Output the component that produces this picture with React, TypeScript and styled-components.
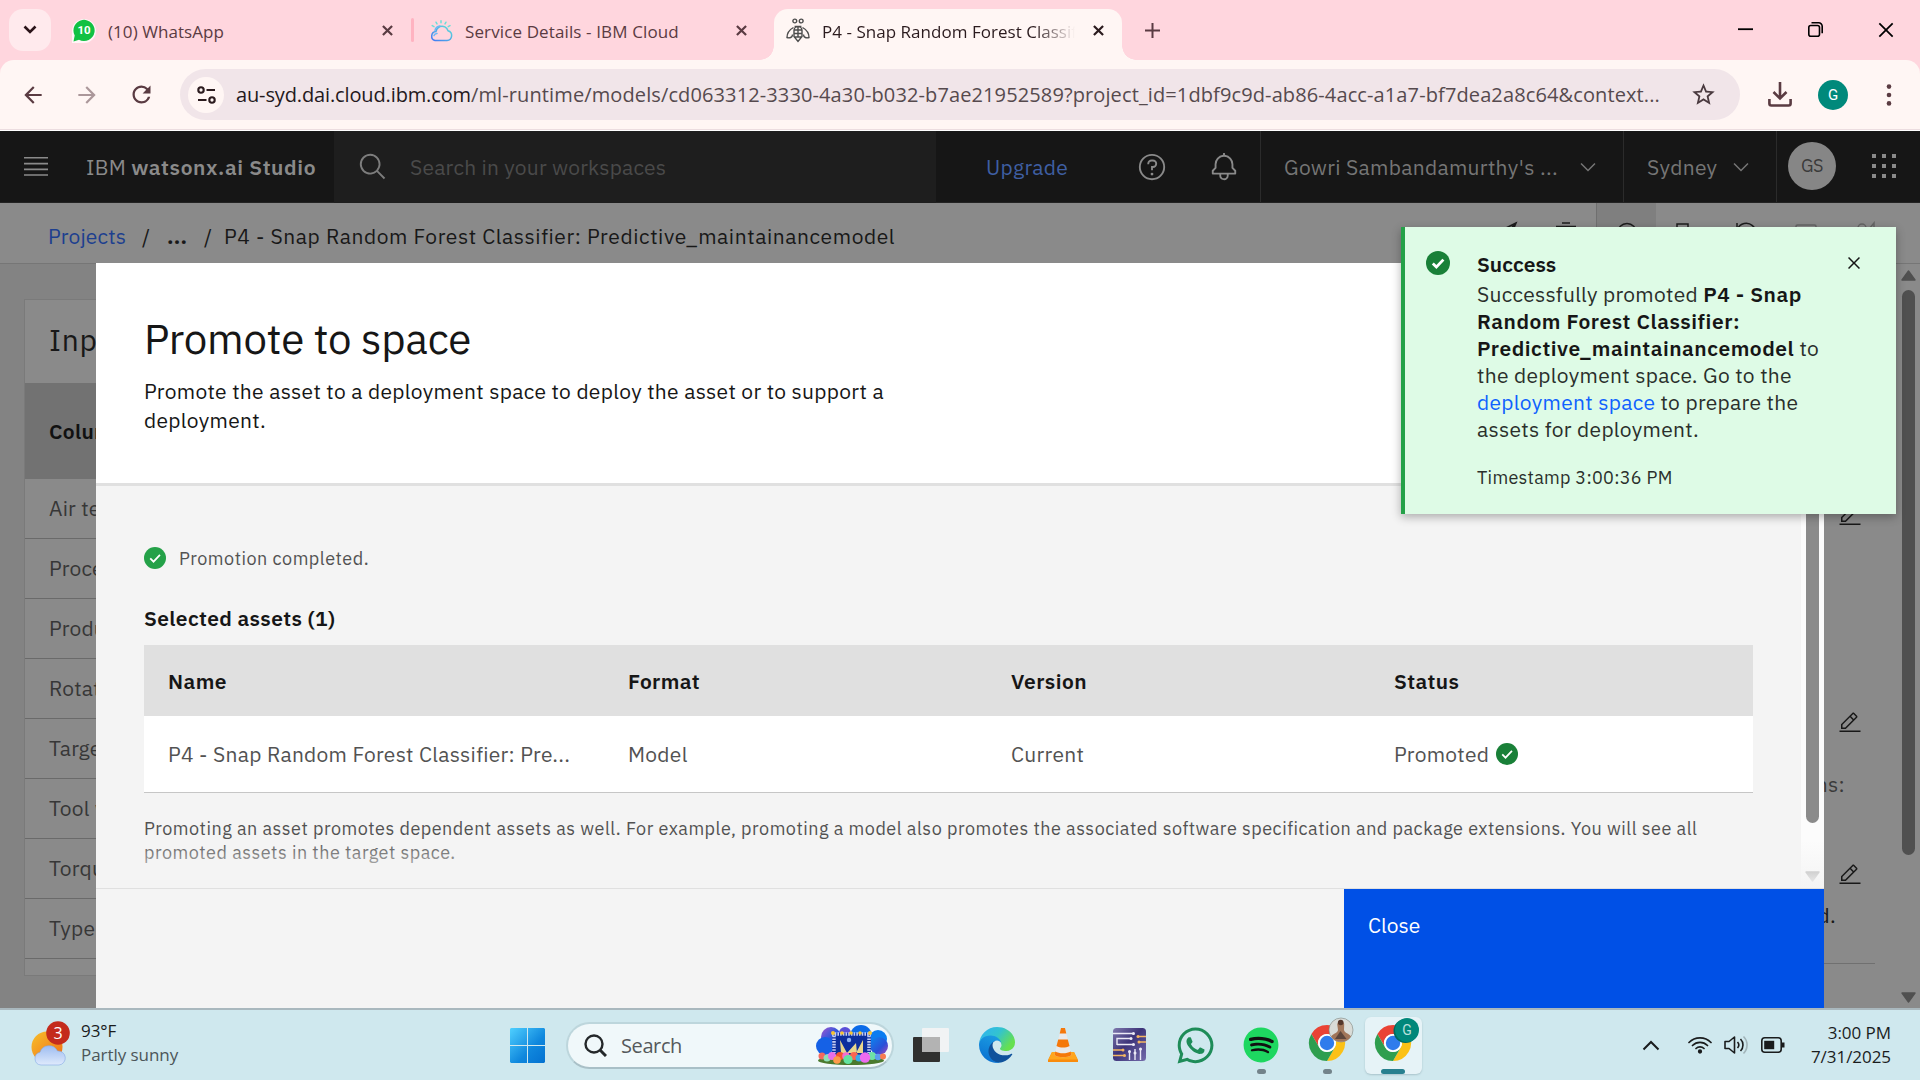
import React from "react";
import styled, { createGlobalStyle, css } from "styled-components";
import { FaWhatsapp, FaSpotify } from "react-icons/fa";
import { MdArrowBack, MdArrowForward, MdRefresh, MdStarBorder } from "react-icons/md";

const plex = `"IBM Plex Sans", Roboto, "Liberation Sans", sans-serif`;
const segoe = `"Segoe UI", "Open Sans", "Noto Sans", sans-serif`;

const Global = createGlobalStyle`
  *, *::before, *::after { box-sizing: border-box; }
  html, body { margin: 0; padding: 0; overflow: hidden; }
  svg { display: block; flex: none; }
`;

const Screen = styled.div`
  width: 1920px;
  height: 1080px;
  display: flex;
  flex-direction: column;
  overflow: hidden;
  background: #ffd6de;
  font-family: ${segoe};
`;

/* ---------- browser chrome ---------- */

const TabStrip = styled.div`
  height: 60px;
  flex: none;
  display: flex;
  padding: 9px 9px 0;
  color: #5a3b42;
`;

const TabSearch = styled.div`
  width: 42px;
  height: 42px;
  border-radius: 14px;
  background: #ffeaed;
  display: flex;
  align-items: center;
  justify-content: center;
  color: #2a1419;
`;

const Tab = styled.div<{ $width: number; $pad: number; $active?: boolean }>`
  position: relative;
  width: ${(p) => p.$width}px;
  height: 51px;
  display: flex;
  align-items: center;
  padding: 0 18px 8px ${(p) => p.$pad}px;
  ${(p) =>
    p.$active &&
    css`
      background: #fff6f4;
      color: #2b1b1e;
      border-radius: 14px 14px 0 0;
      &::before,
      &::after {
        content: "";
        position: absolute;
        bottom: 0;
        width: 14px;
        height: 14px;
      }
      &::before {
        left: -14px;
        background: radial-gradient(circle at 0 0, transparent 13.5px, #fff6f4 14px);
      }
      &::after {
        right: -14px;
        background: radial-gradient(circle at 100% 0, transparent 13.5px, #fff6f4 14px);
      }
    `}
`;

const TabTitle = styled.div<{ $ls?: number; $fade?: boolean }>`
  flex: 1;
  margin: 3px 18px 0 12px;
  font-size: 17px;
  line-height: 24px;
  letter-spacing: ${(p) => p.$ls ?? 0}px;
  white-space: nowrap;
  overflow: hidden;
  ${(p) => p.$fade && `mask-image: linear-gradient(90deg, #000 84%, transparent);`}
`;

const TabDivider = styled.i`
  width: 3px;
  height: 24px;
  margin-top: 9px;
  border-radius: 2px;
  background: #ffb3c1;
`;

const NewTab = styled.div`
  width: 60px;
  height: 42px;
  display: flex;
  align-items: center;
  justify-content: center;
`;

const WindowButtons = styled.div`
  margin-left: auto;
  width: 210px;
  height: 42px;
  display: flex;
  color: #000;
  margin-right: -9px;
  position: relative;
  & > svg {
    margin: 13px 27.5px;
  }
`;

const Toolbar = styled.div`
  height: 71px;
  flex: none;
  display: flex;
  align-items: center;
  padding: 0 25px 2px 20px;
  background: #fff6f4;
  border-radius: 14px 14px 0 0;
  box-shadow: inset 0 -1px #fff, inset 0 -2px #ecdde0;
  color: #5a3b42;
`;

const NavIcon = styled.div<{ $dim?: boolean }>`
  width: 54px;
  display: flex;
  opacity: ${(p) => (p.$dim ? 0.5 : 1)};
`;

const Omnibox = styled.div`
  width: 1560px;
  height: 51px;
  margin-left: -2px;
  border-radius: 26px;
  background: #f1e5e9;
  display: flex;
  align-items: center;
  padding: 0 23px 0 8px;
`;

const SiteInfo = styled.div`
  width: 36px;
  height: 36px;
  border-radius: 50%;
  background: #fff6f4;
  display: flex;
  align-items: center;
  justify-content: center;
`;

const Url = styled.div`
  flex: 1;
  margin-left: 12px;
  font-size: 20px;
  line-height: 28px;
  letter-spacing: 0.115px;
  white-space: nowrap;
  color: #564a4e;
  b {
    font-weight: 400;
    letter-spacing: -0.13px;
    color: #24191c;
  }
`;

const ProfileBadge = styled.div`
  width: 30px;
  height: 30px;
  border-radius: 50%;
  margin: 0 38px 0 26px;
  background: #00897b;
  color: #fff;
  font: 15px/30px Roboto, sans-serif;
  text-align: center;
`;

/* ---------- application ---------- */

const AppArea = styled.div`
  position: relative;
  height: 877px;
  flex: none;
  display: flex;
  flex-direction: column;
  overflow: hidden;
  background: #8a8a8a;
  font-family: ${plex};
  font-size: 21px;
  letter-spacing: 0.3px;
  color: #181818;
`;

const Header = styled.header`
  height: 72px;
  flex: none;
  display: flex;
  background: #161616;
  border-bottom: 1px solid #232323;
  color: #8a8a8a;
`;

const Brand = styled.div`
  width: 334px;
  display: flex;
  align-items: center;
  padding-left: 24px;
  gap: 38px;
  white-space: pre;
  b {
    font-weight: 600;
    letter-spacing: 0.6px;
  }
`;

const HeaderSearch = styled.div`
  width: 602px;
  height: 72px;
  display: flex;
  align-items: center;
  padding-left: 24px;
  gap: 22px;
  background: #1e1e1e;
  color: #4a4a4a;
  letter-spacing: 0.21px;
  svg {
    color: #7d7d7d;
  }
`;

const HeaderActions = styled.div`
  width: 324px;
  display: flex;
  align-items: center;
  padding-left: 50px;
  span {
    color: #3f5fa3;
    width: 151px;
  }
  svg + svg {
    margin-left: 42px;
  }
`;

const HeaderSelect = styled.div<{ $width: number }>`
  width: ${(p) => p.$width}px;
  border-left: 1px solid #2b2b2b;
  display: flex;
  align-items: center;
  justify-content: space-between;
  padding: 0 23px;
  color: #757575;
`;

const HeaderEnd = styled.div`
  flex: 1;
  border-left: 1px solid #2b2b2b;
  display: flex;
  align-items: center;
  justify-content: space-between;
  padding: 0 24px 2px 11px;
`;

const Initials = styled.div`
  width: 48px;
  height: 48px;
  border-radius: 50%;
  background: #868686;
  color: #3a3a3a;
  font-size: 18px;
  letter-spacing: -0.4px;
  line-height: 48px;
  text-align: center;
`;

const Crumbs = styled.nav`
  height: 61px;
  flex: none;
  display: flex;
  align-items: center;
  padding: 0 24px 0 48px;
  background: #8a8a8a;
  border-bottom: 1px solid #767676;
`;

const Crumb = styled.span<{ $w?: number; $link?: boolean; $ls?: number; $bold?: boolean }>`
  padding-top: 5px;
  width: ${(p) => (p.$w ? `${p.$w}px` : "auto")};
  color: ${(p) => (p.$link ? "#1d3f8f" : "#181818")};
  letter-spacing: ${(p) => p.$ls ?? 0.18}px;
  font-weight: ${(p) => (p.$bold ? 700 : 400)};
  white-space: nowrap;
`;

const CrumbTools = styled.div`
  margin-left: auto;
  align-self: stretch;
  display: flex;
`;

const CrumbTool = styled.div<{ $active?: boolean; $dim?: boolean }>`
  width: 60px;
  display: flex;
  align-items: center;
  justify-content: center;
  color: ${(p) => (p.$dim ? "#646464" : "#1c1c1c")};
  ${(p) => p.$active && `background: #7f7f7f; border-left: 1px solid #6f6f6f;`}
`;

const Workspace = styled.div`
  flex: 1;
  display: flex;
  min-height: 0;
`;

const LeftPane = styled.div`
  width: 1200px;
  padding: 35px 24px 32px;
  background: #838383;
`;

const SchemaCard = styled.div`
  height: 677px;
  background: #8a8a8a;
  border: 1px solid #7a7a7a;
`;

const SchemaTitle = styled.div`
  height: 83px;
  padding: 22px 24px 0;
  font-size: 30px;
  line-height: 36px;
  letter-spacing: 0.7px;
`;

const SchemaHead = styled.div`
  height: 96px;
  padding: 0 24px;
  background: #727272;
  font-weight: 600;
  line-height: 96px;
  color: #111;
`;

const SchemaRow = styled.div`
  height: 60px;
  padding: 0 24px;
  border-bottom: 1px solid #6a6a6a;
  line-height: 59px;
  letter-spacing: 0.2px;
  color: #373737;
`;

const RightPane = styled.div`
  flex: 1;
  padding: 240px 22px 0 0;
  display: flex;
  flex-direction: column;
  align-items: flex-end;
`;

const EditSlot = styled.div<{ $gap: number }>`
  height: 24px;
  margin: 0 13px ${(p) => p.$gap}px 0;
`;

const PaneText = styled.div<{ $mr: number; $gap: number; $dim?: boolean }>`
  line-height: 26px;
  margin: 0 ${(p) => p.$mr}px ${(p) => p.$gap}px 0;
  color: ${(p) => (p.$dim ? "#3a3a3a" : "#181818")};
`;

const PaneRule = styled.div`
  width: 600px;
  height: 1px;
  background: #707070;
`;

const Scroll = styled.div<{ $pad: string; $track: string; $thumb: string }>`
  width: 23px;
  flex: none;
  display: flex;
  flex-direction: column;
  align-items: center;
  justify-content: space-between;
  padding: ${(p) => p.$pad};
  background: ${(p) => p.$track};
  color: ${(p) => p.$thumb};
`;

const Thumb = styled.div<{ $h: number; $mb: number }>`
  width: 13px;
  height: ${(p) => p.$h}px;
  margin-bottom: ${(p) => p.$mb}px;
  border-radius: 7px;
  background: currentColor;
`;

/* ---------- modal ---------- */

const Modal = styled.section`
  position: absolute;
  left: 96px;
  top: 132px;
  width: 1728px;
  height: 745px;
  display: flex;
  flex-direction: column;
  background: #f4f4f4;
  color: #161616;
`;

const ModalHead = styled.div`
  height: 223px;
  padding: 48px 48px 0;
  background: #fff;
  border-bottom: 3px solid #e0e0e0;
`;

const ModalTitle = styled.h1`
  margin: 0;
  font-size: 42px;
  font-weight: 400;
  line-height: 55px;
  letter-spacing: -0.22px;
`;

const ModalLead = styled.p`
  margin: 11px 0 0;
  width: 780px;
  line-height: 29px;
`;

const ModalScroll = styled.div`
  position: relative;
  height: 402px;
  display: flex;
  overflow: hidden;
  &::after {
    content: "";
    position: absolute;
    left: 0;
    right: 0;
    bottom: 0;
    height: 48px;
    background: linear-gradient(rgba(244, 244, 244, 0), #f4f4f4);
  }
`;

const ModalBody = styled.div`
  flex: 1;
  padding: 60px 48px 0;
`;

const Completed = styled.div`
  height: 24px;
  display: flex;
  align-items: center;
  gap: 13px;
  font-size: 18px;
  letter-spacing: 0.51px;
  color: #525252;
`;

const AssetsTitle = styled.h2`
  margin: 35px 0 13px;
  font-size: 21px;
  font-weight: 600;
  line-height: 27px;
  letter-spacing: 0.36px;
`;

const TableRow = styled.div<{ $head?: boolean }>`
  display: grid;
  grid-template-columns: 460px 383px 383px 383px;
  align-items: center;
  height: ${(p) => (p.$head ? 71 : 77)}px;
  background: ${(p) => (p.$head ? "#e0e0e0" : "#fff")};
  border-bottom: ${(p) => (p.$head ? "none" : "1px solid #c6c6c6")};
  font-weight: ${(p) => (p.$head ? 600 : 400)};
  letter-spacing: ${(p) => (p.$head ? 0.4 : 0.28)}px;
  color: ${(p) => (p.$head ? "#161616" : "#525252")};
`;

const Cell = styled.div`
  display: flex;
  align-items: center;
  gap: 7px;
  padding-left: 24px;
  white-space: nowrap;
`;

const Hint = styled.p`
  margin: 24px 0 0;
  font-size: 18px;
  line-height: 24px;
  letter-spacing: 0.5px;
  color: #525252;
`;

const ModalFoot = styled.div`
  height: 120px;
  border-top: 1px solid #e0e0e0;
  display: flex;
  justify-content: flex-end;
`;

const CloseButton = styled.button`
  width: 480px;
  padding: 22px 24px;
  border: 0;
  background: #0050e6;
  color: #fff;
  font: 21px/28px ${plex};
  text-align: left;
  display: flex;
  align-items: flex-start;
`;

/* ---------- toast ---------- */

const Toast = styled.aside`
  position: absolute;
  left: 1401px;
  top: 96px;
  width: 495px;
  height: 287px;
  display: flex;
  padding: 24px 30px 0 21px;
  background: #defbe6;
  border-left: 4px solid #24a148;
  box-shadow: 0 3px 9px rgba(0, 0, 0, 0.3);
  line-height: 27px;
  color: #161616;
`;

const ToastText = styled.div`
  flex: 1;
  margin-left: 27px;
  white-space: nowrap;
  color: #2a2f2b;
  b {
    font-weight: 600;
    letter-spacing: 0.52px;
    color: #161616;
  }
  a {
    color: #0f62fe;
  }
`;

const ToastTitle = styled.div`
  margin-bottom: 3px;
  font-weight: 600;
  letter-spacing: 0.04px;
  color: #161616;
`;

const ToastTime = styled.div`
  margin-top: 23px;
  font-size: 18px;
  line-height: 24px;
`;

const ToastClose = styled.div`
  margin-top: 0;
`;

/* ---------- taskbar ---------- */

const Taskbar = styled.footer`
  height: 72px;
  flex: none;
  display: flex;
  align-items: center;
  background: #cfe8ee;
  border-top: 2px solid #a9b8be;
  color: #1a1c1d;
`;

const Weather = styled.div`
  width: 510px;
  display: flex;
  align-items: center;
  padding: 0 0 4px 30px;
  gap: 9px;
`;

const Stack = styled.div<{ $right?: boolean }>`
  font-size: 17px;
  line-height: 24px;
  letter-spacing: -0.05px;
  text-align: ${(p) => (p.$right ? "right" : "left")};
  small {
    display: block;
    font-size: 17px;
    color: #4c5659;
  }
`;

const SearchPill = styled.div`
  width: 328px;
  height: 47px;
  margin: 0 19px 0 21px;
  padding: 0 4px 0 16px;
  border-radius: 24px;
  border: 2px solid #bdd6dc;
  border-bottom-color: #a9c0c7;
  background: #f0f8fa;
  display: flex;
  align-items: center;
  font-size: 20px;
  letter-spacing: -0.4px;
  color: #55595b;
  span {
    flex: 1;
    margin-left: 14px;
  }
`;

const TaskItem = styled.div<{ $w?: number; $active?: boolean }>`
  width: ${(p) => p.$w ?? 66}px;
  height: 70px;
  display: flex;
  flex-direction: column;
  align-items: center;
  justify-content: flex-end;
`;

const TaskTile = styled.div<{ $active?: boolean }>`
  width: 57px;
  height: 57px;
  display: flex;
  flex-direction: column;
  align-items: center;
  justify-content: flex-end;
  margin-bottom: 6px;
  border-radius: 6px;
  background: ${(p) => (p.$active ? "#e6f3f7" : "transparent")};
  box-shadow: ${(p) => (p.$active ? "0 1px 2px #a9c3ca" : "none")};
`;

const Running = styled.i<{ $w: number; $color: string }>`
  width: ${(p) => p.$w}px;
  height: 5px;
  margin-top: 1px;
  border-radius: 3px;
  background: ${(p) => p.$color};
`;

const Tray = styled.div`
  margin-left: auto;
  width: 278px;
  display: flex;
  align-items: center;
  padding-right: 29px;
`;

const TrayIcons = styled.div`
  display: flex;
  align-items: center;
  gap: 12px;
  margin-left: 28px;
  flex: 1;
`;

/* ---------- icons ---------- */

type IconProps = { d: string; size: number };
const Carbon = ({ d, size }: IconProps) => (
  <svg width={size} height={size} viewBox="0 0 32 32" fill="currentColor">
    <path d={d} fillRule="evenodd" />
  </svg>
);

const P = {
  search: "M29 27.586l-7.552-7.552a11.018 11.018 0 1 0-1.414 1.414L27.586 29zM4 13a9 9 0 1 1 9 9 9.01 9.01 0 0 1-9-9z",
  chevron: "M16 22 6 12l1.4-1.4 8.6 8.6 8.6-8.6L26 12z",
  close: "M24 9.4 22.6 8 16 14.6 9.4 8 8 9.4l6.6 6.6L8 22.6 9.4 24l6.6-6.6 6.6 6.6 1.4-1.4-6.6-6.6z",
  edit: "M2 26h28v2H2zM25.4 9c.8-.8.8-2 0-2.8l-3.6-3.6c-.8-.8-2-.8-2.8 0l-15 15V24h6.4l15-15zm-5-5L24 7.6l-3 3L17.4 7l3-3zM6 22v-3.6l10-10 3.6 3.6-10 10H6z",
  bell: "M28.7 19.3 26 16.6V13a10 10 0 0 0-9-9.95V1h-2v2.05A10 10 0 0 0 6 13v3.6l-2.7 2.7A1 1 0 0 0 3 20v3a1 1 0 0 0 1 1h7v.78a5.2 5.2 0 0 0 4.5 5.2A5 5 0 0 0 21 25v-1h7a1 1 0 0 0 1-1v-3a1 1 0 0 0-.3-.7zM19 25a3 3 0 0 1-6 0v-1h6zm8-3H5v-1.6l2.7-2.7A1 1 0 0 0 8 17v-4a8 8 0 0 1 16 0v4a1 1 0 0 0 .3.7l2.7 2.7z",
  help: "M16 2a14 14 0 1 0 14 14A14 14 0 0 0 16 2zm0 26a12 12 0 1 1 12-12 12 12 0 0 1-12 12zM17 8h-1.5A4.49 4.49 0 0 0 11 12.5v.5h2v-.5a2.5 2.5 0 0 1 2.5-2.5H17a2.5 2.5 0 0 1 0 5h-2v4.5h2V17a4.5 4.5 0 0 0 0-9zM16 22a1.5 1.5 0 1 0 0 3 1.5 1.5 0 0 0 0-3z",
};

const Cross = ({ size = 11, w = 2.4 }: { size?: number; w?: number }) => (
  <svg width={size} height={size} viewBox="0 0 12 12" fill="none" stroke="currentColor" strokeWidth={w}>
    <path d="M1 1l10 10M11 1L1 11" />
  </svg>
);

const Check = ({ size, color, bold }: { size: number; color: string; bold?: boolean }) => (
  <svg width={size} height={size} viewBox="0 0 24 24">
    <circle cx="12" cy="12" r="12" fill={color} />
    <path d="M6.8 12.4l3.6 3.6 7-7.4" fill="none" stroke="#fff" strokeWidth={bold ? 2.8 : 1.9} />
  </svg>
);

const ArrowTip = ({ up }: { up?: boolean }) => (
  <svg width="15" height="11" viewBox="0 0 15 11" fill="currentColor" transform={up ? undefined : "rotate(180)"}>
    <path d="M7.5 1 14 10H1z" stroke="currentColor" strokeWidth="1.4" strokeLinejoin="round" />
  </svg>
);

const ChatBadge = () => (
  <svg width="24" height="25" viewBox="0 0 24 25">
    <path d="M0 25V13A12 12 0 1 1 12 25z" fill="#fff" opacity=".75" />
    <path d="M1.5 23.5l1.2-6A10.6 10.6 0 1 1 7 21.8z" fill="#11c143" />
    <text x="12" y="16.4" fontSize="11.5" fontWeight="700" fill="#fff" textAnchor="middle" fontFamily="Roboto, sans-serif">10</text>
  </svg>
);

const CloudIcon = () => (
  <svg width="24" height="22" viewBox="0 0 24 22" fill="none" strokeWidth="1.5" strokeLinecap="round">
    <defs>
      <linearGradient id="cl" x1="1" y1="0" x2="0" y2="1">
        <stop offset="0" stopColor="#5fe3d6" />
        <stop offset="1" stopColor="#4178f5" />
      </linearGradient>
    </defs>
    <path d="M6 20.5h12a5 5 0 0 0 1-9.8 6.2 6.2 0 0 0-8-4.2 6.4 6.4 0 0 0-4 5A4.6 4.6 0 0 0 6 20.5z" stroke="url(#cl)" />
    <path d="M6 10.5A5.6 5.6 0 0 1 11 6M5 15.500a3 3 0 0 1 3-2" stroke="#6cb9f5" />
    <path d="M12 .8v2M7 2.200l1 1.700M17 2.200l-1 1.700M3.200 5.600l1.800 1M21 5.600l-1.800 1" stroke="#6be0d8" />
  </svg>
);

const BeeIcon = () => (
  <svg width="24" height="25" viewBox="0 0 24 25" fill="none" stroke="#4c4c4c" strokeWidth="1.4">
    <circle cx="8.800" cy="3" r="1.900" />
    <circle cx="15.200" cy="3" r="1.900" />
    <path d="M8 12.500a4 4 0 0 1 8 0v6l-4 5-4-5zM8.600 8.500h6.800M8 12h8M8 15.500h8M8 19h8M12 8.500v10.500" />
    <path d="M7.500 9.500C3 12 1 16 1 19.500c2.500 1 5.500 0 5.500-3M16.500 9.500C21 12 23 16 23 19.500c-2.500 1-5.500 0-5.500-3" />
  </svg>
);

const Tune = () => (
  <svg width="19" height="18" viewBox="0 0 19 18" fill="none" stroke="#2b1b1e" strokeWidth="2.1">
    <circle cx="4" cy="4" r="2.700" />
    <circle cx="15" cy="14" r="2.700" />
    <path d="M9.500 4H18M1 14h8.500" />
  </svg>
);

const ChromeIcon = ({ children }: { children?: React.ReactNode }) => (
  <svg width="54" height="46" viewBox="0 0 54 46">
    <g transform="translate(9 8) scale(.75)">
      <path d="M24 12h20.800A24 24 0 0 0 3.200 12l10.400 18A12 12 0 0 1 24 12z" fill="#ea4335" />
      <path d="M44.800 12H24a12 12 0 0 1 10.400 18L24 48A24 24 0 0 0 44.800 12z" fill="#fbc116" />
      <path d="M13.600 30 3.200 12A24 24 0 0 0 24 48l10.400-18A12 12 0 0 1 13.600 30z" fill="#2f9e4f" />
      <circle cx="24" cy="24" r="12" fill="#fff" />
      <circle cx="24" cy="24" r="9.600" fill="#2f7cec" />
    </g>
    {children}
  </svg>
);

const Edge = () => (
  <svg width="36" height="36" viewBox="0 0 256 256">
    <defs>
      <linearGradient id="e1" x1=".1" y1="0" x2="1" y2=".5">
        <stop offset="0" stopColor="#2fb4f0" />
        <stop offset=".5" stopColor="#33c3cf" />
        <stop offset="1" stopColor="#66e04f" />
      </linearGradient>
      <linearGradient id="e2" x1=".6" y1="0" x2=".3" y2="1">
        <stop offset="0" stopColor="#1b9de2" />
        <stop offset="1" stopColor="#0a6fd0" />
      </linearGradient>
    </defs>
    <path fill="#0f529c" d="M231.070 190.540a93.400 93.400 0 0 1-10.540 4.710 101.870 101.870 0 0 1-35.900 6.460c-47.320 0-88.540-32.550-88.540-74.320A31.480 31.480 0 0 1 112.520 99.800c-42.800 1.800-53.800 46.400-53.800 72.530 0 73.880 68.090 81.370 82.760 81.370 7.910 0 19.840-2.300 27-4.560l1.310-.44a128.340 128.340 0 0 0 66.600-52.800 4 4 0 0 0-5.320-5.360z" />
    <path fill="url(#e2)" d="M105.730 241.420a79.200 79.200 0 0 1-22.740-21.340 80.720 80.720 0 0 1 29.530-120.280c3.130-1.470 8.450-4.130 15.540-4a32.350 32.350 0 0 1 25.690 13 31.880 31.880 0 0 1 6.360 18.660c0-.21 24.460-79.600-80-79.600-43.900 0-80 41.660-80 78.210a130.150 130.150 0 0 0 12.110 56 128 128 0 0 0 156.380 67.110 75.550 75.550 0 0 1-62.780-8z" />
    <path fill="url(#e1)" d="M152.330 148.860c-.81 1.050-3.300 2.500-3.300 5.660 0 2.610 1.700 5.120 4.720 7.230 14.380 10 41.490 8.680 41.560 8.680a59.560 59.560 0 0 0 30.270-8.350 61.380 61.380 0 0 0 30.430-52.880c.26-22.410-8-37.310-11.340-43.910C223.460 23.840 177.720 0 128 0A128 128 0 0 0 0 126.200c.48-36.540 36.800-66.050 80-66.050 3.500 0 23.460.34 42 10.070 16.340 8.580 24.900 18.940 30.850 29.210 6.180 10.670 7.280 24.150 7.280 29.520s-2.740 13.330-7.800 19.910z" />
  </svg>
);

const Vlc = () => (
  <svg width="30" height="35" viewBox="0 0 30 35">
    <path d="M4 25h22l4 8v2H0v-2z" fill="#f98b0c" />
    <path d="M4 25h22l3.500 7.500h-29z" fill="#ffa61d" />
    <path d="M13 1h4l6.500 27c-3 3-14 3-17 0z" fill="#e9e9ea" />
    <path d="M13 1h4l1.300 5.500h-6.600zM10.200 12.500h9.600l1.700 6.500c-4 2-9 2-13 0z" fill="#f5780a" />
    <path d="M7.300 24.500c4 2.400 11.400 2.400 15.400 0l.8 3.500c-3 3-14 3-17 0z" fill="#f5780a" />
  </svg>
);

const Circuit = () => (
  <svg width="33" height="33" viewBox="0 0 33 33" fill="none" strokeWidth="1.400">
    <defs>
      <linearGradient id="ci" x1="0" y1="0" x2="1" y2="1">
        <stop offset="0" stopColor="#8079ae" />
        <stop offset=".45" stopColor="#3d3479" />
        <stop offset="1" stopColor="#746cab" />
      </linearGradient>
    </defs>
    <rect width="33" height="33" rx="3.500" fill="url(#ci)" />
    <path d="M0 5.500h20M4 17v-6.500h13M4 16.500h16M16.500 32v-8M22 32v-6.500M27.500 32V21M22 32v-11" stroke="#eceaf6" />
    <path d="M33 8.500h-8M33 14h-6M0 22h9M0 27.500h11" stroke="#f3b561" />
    <g fill="#eceaf6">
      <circle cx="20.500" cy="5.500" r="1.500" /><circle cx="18" cy="10.500" r="1.500" /><circle cx="20.500" cy="16.500" r="1.500" />
      <circle cx="16.500" cy="23.500" r="1.500" /><circle cx="22" cy="25" r="1.500" /><circle cx="27.500" cy="21" r="1.500" />
    </g>
    <g fill="#f3b561">
      <circle cx="25" cy="8.500" r="1.500" /><circle cx="26" cy="14" r="1.500" /><circle cx="10" cy="22" r="1.500" /><circle cx="11.500" cy="27.500" r="1.500" />
    </g>
  </svg>
);

const Doodle = () => (
  <svg width="72" height="40" viewBox="0 0 72 40">
    <defs>
      <linearGradient id="dd" x1="0" y1="0" x2="1" y2="1">
        <stop offset="0" stopColor="#a556cf" />
        <stop offset=".55" stopColor="#2457dd" />
        <stop offset="1" stopColor="#0a3fc9" />
      </linearGradient>
      <linearGradient id="de" x1="0" y1="0" x2="1" y2="1">
        <stop offset="0" stopColor="#0b86ee" />
        <stop offset=".6" stopColor="#2a50d8" />
        <stop offset="1" stopColor="#b247b8" />
      </linearGradient>
    </defs>
    <ellipse cx="35" cy="35.500" rx="33" ry="4.500" fill="#4b7a2e" />
    <circle cx="15" cy="12" r="10" fill="url(#dd)" />
    <circle cx="9" cy="21" r="9" fill="#1561e6" />
    <circle cx="29" cy="8" r="6" fill="#5a4fd8" />
    <circle cx="45" cy="11" r="11" fill="#0c6be8" />
    <circle cx="62" cy="14" r="9" fill="#0b7cf0" />
    <circle cx="63" cy="21" r="9" fill="url(#de)" />
    <rect x="16" y="8" width="39" height="22" fill="#0d2f9d" />
    <path d="M18 8v20M53 8v20M16 9h39" stroke="#c3cdf3" strokeWidth="3.500" strokeDasharray="1.600 1.100" />
    <path d="M24 15l7 13h-6zM47 15l-7 13h7zM31 28l9-10 1 10z" fill="#e8d68c" />
    <circle cx="33" cy="15" r="2.200" fill="#8fb3f3" />
    <g fill="#f7c531">
      <circle cx="17" cy="8" r="2" /><circle cx="26" cy="8" r="1.800" /><circle cx="35" cy="8" r="1.800" /><circle cx="44" cy="8" r="1.800" /><circle cx="54" cy="8" r="2" />
    </g>
    <circle cx="6" cy="31" r="3.500" fill="#f4695f" />
    <circle cx="11" cy="33" r="3.500" fill="#8fe0b8" />
    <circle cx="16" cy="31" r="4" fill="#e96ee9" />
    <circle cx="24" cy="31" r="4" fill="#f7552f" />
    <circle cx="21" cy="35" r="3.800" fill="#ff9a4a" />
    <circle cx="30" cy="31" r="3.800" fill="#f46fd0" />
    <circle cx="38" cy="31" r="4" fill="#fa6550" />
    <circle cx="32" cy="34.500" r="4.600" fill="#63e3a0" />
    <circle cx="43" cy="33" r="3.500" fill="#39a9ea" />
    <circle cx="56" cy="31" r="4" fill="#6ee3a6" />
    <circle cx="49" cy="32.500" r="5.200" fill="#ee6bf0" />
    <circle cx="62" cy="32" r="3.200" fill="#5b9ff0" />
    <circle cx="67" cy="31.500" r="3" fill="#f77b52" />
  </svg>
);

const WeatherIcon = () => (
  <svg width="42" height="46" viewBox="0 0 42 46">
    <defs>
      <linearGradient id="su" x1="0" y1="0" x2="1" y2="1">
        <stop offset="0" stopColor="#f6c02c" />
        <stop offset="1" stopColor="#f26a12" />
      </linearGradient>
      <linearGradient id="wc" x1="0" y1="0" x2="0" y2="1">
        <stop offset="0" stopColor="#9dbcf0" />
        <stop offset="1" stopColor="#dfeafc" />
      </linearGradient>
    </defs>
    <circle cx="17" cy="27" r="15.500" fill="url(#su)" />
    <path d="M11 45a6.500 6.500 0 0 1-1-12.800 9.500 9.500 0 0 1 17.500-1.200A7 7 0 1 1 29 45z" fill="url(#wc)" stroke="#85a9e6" strokeWidth=".6" />
    <circle cx="28" cy="13" r="11.800" fill="#c42b1c" />
    <text x="28" y="18.800" fontSize="16" fill="#fff" textAnchor="middle" fontFamily="Open Sans, sans-serif">3</text>
  </svg>
);

const rows = ["Air temperature", "Process temperature", "Product ID", "Rotational speed", "Target", "Tool wear", "Torque", "Type"];

export default function App() {
  return (
    <Screen>
      <Global />
      <TabStrip>
        <TabSearch>
          <svg width="14" height="10" viewBox="0 0 14 10" fill="none" stroke="currentColor" strokeWidth="2.600">
            <path d="M1.500 1.500 7 7l5.500-5.500" />
          </svg>
        </TabSearch>
        <Tab $width={360} $pad={21}>
          <ChatBadge />
          <TabTitle $ls={0.06}>(10) WhatsApp</TabTitle>
          <Cross />
        </Tab>
        <TabDivider />
        <Tab $width={351} $pad={15}>
          <CloudIcon />
          <TabTitle $ls={0.12}>Service Details - IBM Cloud</TabTitle>
          <Cross />
        </Tab>
        <Tab $width={348} $pad={12} $active style={{ marginLeft: 9 }}>
          <BeeIcon />
          <TabTitle $ls={0.03} $fade>P4 - Snap Random Forest Classifier</TabTitle>
          <Cross />
        </Tab>
        <NewTab>
          <svg width="15" height="15" viewBox="0 0 15 15" stroke="currentColor" strokeWidth="2">
            <path d="M7.500 0v15M0 7.500h15" />
          </svg>
        </NewTab>
        <WindowButtons>
          <svg width="15" height="15" viewBox="0 0 15 15" stroke="currentColor" strokeWidth="1.800"><path d="M0 7.200h15" /></svg>
          <svg width="15" height="15" viewBox="0 0 15 15" fill="none" stroke="currentColor" strokeWidth="1.600">
            <rect x=".8" y="3.500" width="10.700" height="10.700" rx="2" />
            <path d="M3.500.8h7.200a3.500 3.500 0 0 1 3.500 3.500v7" />
          </svg>
          <Cross size={16} w={1.3} />
        </WindowButtons>
      </TabStrip>

      <Toolbar>
        <NavIcon><MdArrowBack size={26} /></NavIcon>
        <NavIcon $dim><MdArrowForward size={26} /></NavIcon>
        <NavIcon><MdRefresh size={27} /></NavIcon>
        <Omnibox>
          <SiteInfo><Tune /></SiteInfo>
          <Url><b>au-syd.dai.cloud.ibm.com</b>/ml-runtime/models/cd063312-3330-4a30-b032-b7ae21952589?project_id=1dbf9c9d-ab86-4acc-a1a7-bf7dea2a8c64&amp;context...</Url>
          <MdStarBorder size={27} color="#4a3a3f" />
        </Omnibox>
        <svg width="24" height="25" viewBox="0 0 24 25" fill="none" stroke="currentColor" strokeWidth="2.600" style={{ marginLeft: 28 }}>
          <path d="M12 0v16M5.500 10 12 16.500 18.500 10M1.400 17v4.500a2 2 0 0 0 2 2h17.200a2 2 0 0 0 2-2V17" />
        </svg>
        <ProfileBadge>G</ProfileBadge>
        <svg width="6" height="22" viewBox="0 0 6 22" fill="currentColor">
          <circle cx="3" cy="2.600" r="2.300" /><circle cx="3" cy="11" r="2.300" /><circle cx="3" cy="19.400" r="2.300" />
        </svg>
      </Toolbar>

      <AppArea>
        <Header>
          <Brand>
            <svg width="24" height="19" viewBox="0 0 24 19" fill="currentColor">
              <path d="M0 0h24v1.600H0zM0 5.800h24v1.600H0zM0 11.600h24v1.600H0zM0 17.200h24v1.600H0z" />
            </svg>
            <span>IBM <b>watsonx.ai Studio</b></span>
          </Brand>
          <HeaderSearch>
            <Carbon d={P.search} size={30} />
            Search in your workspaces
          </HeaderSearch>
          <HeaderActions>
            <span>Upgrade</span>
            <Carbon d={P.help} size={30} />
            <Carbon d={P.bell} size={30} />
          </HeaderActions>
          <HeaderSelect $width={363}>
            Gowri Sambandamurthy's ...
            <Carbon d={P.chevron} size={24} />
          </HeaderSelect>
          <HeaderSelect $width={153}>
            Sydney
            <Carbon d={P.chevron} size={24} />
          </HeaderSelect>
          <HeaderEnd>
            <Initials>GS</Initials>
            <svg width="24" height="24" viewBox="0 0 24 24" fill="currentColor">
              {[0, 10, 20].map((y) => [0, 10, 20].map((x) => <rect key={`${x}-${y}`} x={x} y={y} width="4" height="4" />))}
            </svg>
          </HeaderEnd>
        </Header>

        <Crumbs>
          <Crumb $link $w={94}>Projects</Crumb>
          <Crumb $w={25}>/</Crumb>
          <Crumb $w={37} $bold>...</Crumb>
          <Crumb $w={20}>/</Crumb>
          <Crumb $ls={0.58}>P4 - Snap Random Forest Classifier: Predictive_maintainancemodel</Crumb>
          <CrumbTools>
            <CrumbTool>
              <svg width="24" height="24" viewBox="0 0 24 24" fill="none" stroke="currentColor" strokeWidth="1.500"><path d="M22 2 2 12l8 3 3 8zM22 2 10 15" /></svg>
            </CrumbTool>
            <CrumbTool>
              <svg width="24" height="24" viewBox="0 0 24 24" fill="none" stroke="currentColor" strokeWidth="1.500"><path d="M8 2h8M2 5.500h20M5 5.500v16h14v-16" /></svg>
            </CrumbTool>
            <CrumbTool $active>
              <svg width="24" height="24" viewBox="0 0 24 24" fill="none" stroke="currentColor" strokeWidth="1.500"><circle cx="12" cy="12" r="9.500" /></svg>
            </CrumbTool>
            <CrumbTool>
              <svg width="24" height="24" viewBox="0 0 24 24" fill="none" stroke="currentColor" strokeWidth="1.500"><path d="M3 11V3h11v8zM8 8h13v13H8z" /></svg>
            </CrumbTool>
            <CrumbTool>
              <svg width="24" height="24" viewBox="0 0 24 24" fill="none" stroke="currentColor" strokeWidth="1.500"><path d="M3 2v6h6M3.500 8A9.500 9.500 0 1 1 3 14" /></svg>
            </CrumbTool>
            <CrumbTool $dim>
              <svg width="24" height="24" viewBox="0 0 24 24" fill="none" stroke="currentColor" strokeWidth="1.500"><rect x="2" y="4" width="20" height="16" rx="1.500" /></svg>
            </CrumbTool>
            <CrumbTool $dim>
              <svg width="24" height="24" viewBox="0 0 24 24" fill="none" stroke="currentColor" strokeWidth="1.500"><circle cx="8" cy="7" r="4" /><path d="M15 8l5-6v9" /></svg>
            </CrumbTool>
          </CrumbTools>
        </Crumbs>

        <Workspace>
          <LeftPane>
            <SchemaCard>
              <SchemaTitle>Input schema</SchemaTitle>
              <SchemaHead>Column</SchemaHead>
              {rows.map((r) => <SchemaRow key={r}>{r}</SchemaRow>)}
            </SchemaCard>
          </LeftPane>
          <RightPane>
            <EditSlot $gap={183}><Carbon d={P.edit} size={24} /></EditSlot>
            <EditSlot $gap={36}><Carbon d={P.edit} size={24} /></EditSlot>
            <PaneText $mr={30} $gap={66} $dim>ns:</PaneText>
            <EditSlot $gap={15}><Carbon d={P.edit} size={24} /></EditSlot>
            <PaneText $mr={39} $gap={35}>d.</PaneText>
            <PaneRule />
          </RightPane>
          <Scroll $pad="6px 0 5px" $track="transparent" $thumb="#505050">
            <ArrowTip up />
            <Thumb $h={565} $mb={129} />
            <ArrowTip />
          </Scroll>
        </Workspace>

        <Modal>
          <ModalHead>
            <ModalTitle>Promote to space</ModalTitle>
            <ModalLead>Promote the asset to a deployment space to deploy the asset or to support a deployment.</ModalLead>
          </ModalHead>
          <ModalScroll>
            <ModalBody>
              <Completed>
                <Check size={22} color="#24a148" />
                Promotion completed.
              </Completed>
              <AssetsTitle>Selected assets (1)</AssetsTitle>
              <TableRow $head>
                <Cell>Name</Cell>
                <Cell>Format</Cell>
                <Cell>Version</Cell>
                <Cell>Status</Cell>
              </TableRow>
              <TableRow>
                <Cell>P4 - Snap Random Forest Classifier: Pre...</Cell>
                <Cell>Model</Cell>
                <Cell>Current</Cell>
                <Cell>Promoted <Check size={22} color="#198038" /></Cell>
              </TableRow>
              <Hint>
                Promoting an asset promotes dependent assets as well. For example, promoting a model also promotes the associated software specification and package extensions. You will see all promoted assets in the target space.
              </Hint>
            </ModalBody>
            <Scroll $pad="20px 0 6px" $track="#fcfcfc" $thumb="#8b8b8b">
              <Thumb $h={317} $mb={0} />
              <ArrowTip />
            </Scroll>
          </ModalScroll>
          <ModalFoot>
            <CloseButton>Close</CloseButton>
          </ModalFoot>
        </Modal>

        <Toast>
          <Check size={24} color="#198038" bold />
          <ToastText>
            <ToastTitle>Success</ToastTitle>
            Successfully promoted <b>P4 - Snap<br />Random Forest Classifier:<br />Predictive_maintainancemodel</b> to<br />
            the deployment space. Go to the<br />
            <a>deployment space</a> to prepare the<br />
            assets for deployment.
            <ToastTime>Timestamp 3:00:36 PM</ToastTime>
          </ToastText>
          <ToastClose><Carbon d={P.close} size={24} /></ToastClose>
        </Toast>
      </AppArea>

      <Taskbar>
        <Weather>
          <WeatherIcon />
          <Stack>93°F<small>Partly sunny</small></Stack>
        </Weather>
        <svg width="35" height="35" viewBox="0 0 35 35">
          <defs>
            <linearGradient id="wi" x1="0" y1="0" x2="35" y2="35" gradientUnits="userSpaceOnUse">
              <stop offset="0" stopColor="#4fd0ff" />
              <stop offset=".6" stopColor="#0f87dd" />
              <stop offset="1" stopColor="#0471d0" />
            </linearGradient>
          </defs>
          <path d="M1 0h16v17H0V1zM18 0h16l1 1v16H18zM0 18h17v17H1l-1-1zM18 18h17v16l-1 1H18z" fill="url(#wi)" />
        </svg>
        <SearchPill>
          <svg width="23" height="23" viewBox="0 0 23 23" fill="none" stroke="#24282a" strokeWidth="2.400">
            <circle cx="10" cy="10" r="8.500" /><path d="M16 16l6 6" strokeWidth="3" />
          </svg>
          <span>Search</span>
          <Doodle />
        </SearchPill>
        <svg width="36" height="34" viewBox="0 0 36 34">
          <rect x="0" y="9" width="27" height="25" rx="1" fill="#30302f" />
          <rect x="9" y="0" width="27" height="24" rx="1" fill="#f1f3f4" />
          <rect x="9" y="9" width="18" height="15" fill="#b3b3b3" />
        </svg>
        <TaskItem $w={96}><TaskTile><Edge /><Running $w={0} $color="transparent" style={{ marginTop: 6 }} /></TaskTile></TaskItem>
        <TaskItem $w={36}><TaskTile><Vlc /><Running $w={0} $color="transparent" style={{ marginTop: 7 }} /></TaskTile></TaskItem>
        <TaskItem $w={96}><TaskTile><Circuit /><Running $w={0} $color="transparent" style={{ marginTop: 8 }} /></TaskTile></TaskItem>
        <TaskItem $w={36}><TaskTile><FaWhatsapp size={41} color="#1e8c58" /><Running $w={0} $color="transparent" style={{ marginTop: 3 }} /></TaskTile></TaskItem>
        <TaskItem $w={96}><TaskTile><FaSpotify size={36} color="#1ed760" style={{ background: "radial-gradient(#111 0 14px, transparent 15px)" }} /><Running $w={9} $color="#73838a" style={{ marginTop: 6 }} /></TaskTile></TaskItem>
        <TaskItem $w={36}>
          <TaskTile>
            <ChromeIcon>
              <circle cx="41" cy="13" r="12" fill="#d9dcd8" stroke="#7d8480" strokeWidth=".6" />
              <path d="M31 19.500c3-3.500 6-3 7-6.500l-.8-6c1-3 6.500-3 7 0l-.2 6c1 3.500 4.500 3 7 6.500a12 12 0 0 1-20 0z" fill="#a1765a" />
              <circle cx="40.700" cy="5.500" r="2.800" fill="#54372b" />
              <path d="M35 22l5.500-8 6 8z" fill="#5d463c" />
            </ChromeIcon>
            <Running $w={9} $color="#73838a" style={{ marginTop: 6 }} />
          </TaskTile>
        </TaskItem>
        <TaskItem $w={96}>
          <TaskTile $active>
            <ChromeIcon>
              <circle cx="39.500" cy="14" r="12" fill="#00695f" />
              <circle cx="41" cy="13" r="12" fill="#00877a" />
              <text x="41" y="18.200" fontSize="14" fill="#b9e0dc" textAnchor="middle" fontFamily="Roboto, sans-serif">G</text>
            </ChromeIcon>
            <Running $w={24} $color="#27808f" style={{ marginTop: 6 }} />
          </TaskTile>
        </TaskItem>
        <Tray>
          <svg width="18" height="11" viewBox="0 0 18 11" fill="none" stroke="currentColor" strokeWidth="2"><path d="M1.500 9.500 9 2l7.500 7.500" /></svg>
          <TrayIcons>
            <svg width="24" height="18" viewBox="0 0 24 18" fill="none" stroke="currentColor" strokeWidth="1.700" strokeLinecap="round">
              <path d="M1 6.500a15.500 15.500 0 0 1 22 0M4.500 9.500a10.600 10.600 0 0 1 15 0M8 12.500a5.700 5.700 0 0 1 8 0" />
              <circle cx="12" cy="15.500" r="1.300" fill="currentColor" />
            </svg>
            <svg width="25" height="20" viewBox="0 0 25 20" fill="none" stroke="currentColor" strokeWidth="1.600" strokeLinejoin="round">
              <path d="M1 6.500h4L10.500 2v16L5 13.500H1zM13.500 7a4.500 4.500 0 0 1 0 6M16.500 4a8.500 8.500 0 0 1 0 12" />
              <path d="M19.500 1.500a12 12 0 0 1 0 17" opacity=".25" />
            </svg>
            <svg width="24" height="16" viewBox="0 0 24 16" fill="none" stroke="currentColor" strokeWidth="1.600">
              <rect x=".8" y=".8" width="19.400" height="14.400" rx="3" />
              <rect x="3.200" y="3.800" width="10" height="8.400" fill="currentColor" stroke="none" />
              <path d="M22 5.500v5" strokeWidth="3" />
            </svg>
          </TrayIcons>
          <Stack $right>3:00 PM<br />7/31/2025</Stack>
        </Tray>
      </Taskbar>
    </Screen>
  );
}
